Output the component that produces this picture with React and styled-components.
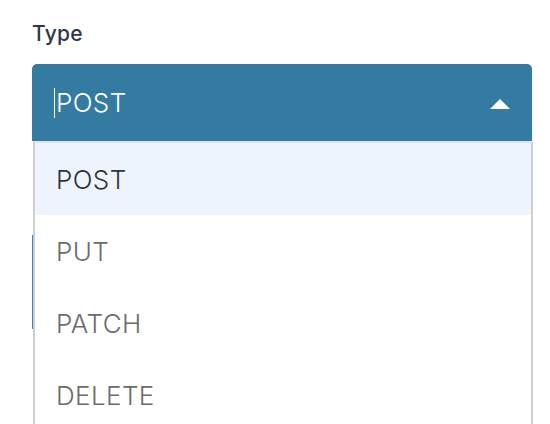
import styled, { createGlobalStyle } from "styled-components";

const GlobalStyle = createGlobalStyle`
  body {
    margin: 0;
    background: #ffffff;
    font-family: Inter, "Noto Sans", sans-serif;
  }
`;

const Page = styled.div`
  box-sizing: border-box;
  min-height: 440px;
  padding: 22px 18px 0 32px;
  width: 550px;
`;

const Label = styled.label`
  display: block;
  font-size: 21px;
  line-height: 24px;
  font-weight: 500;
  letter-spacing: 0.3px;
  color: #2d3748;
  margin-bottom: 18px;
`;

const SelectWrap = styled.div`
  position: relative;
`;

const Trigger = styled.div`
  box-sizing: border-box;
  height: 77px;
  display: flex;
  align-items: center;
  justify-content: space-between;
  padding: 0 22px 0 22px;
  background: #347ba1;
  border-radius: 5px 5px 0 0;
  color: #ffffff;
  font-size: 26px;
  font-weight: 300;
`;

const Value = styled.span`
  display: flex;
  align-items: center;
  letter-spacing: 0.4px;
`;

const Caret = styled.span`
  width: 1px;
  height: 30px;
  background: #ffffff;
  margin-right: 1px;
`;

const Arrow = styled.span`
  width: 0;
  height: 0;
  border-left: 10px solid transparent;
  border-right: 10px solid transparent;
  border-bottom: 10px solid #ffffff;
  margin-top: 2px;
`;

const Menu = styled.ul`
  position: absolute;
  top: 100%;
  left: 1px;
  z-index: 2;
  box-sizing: border-box;
  width: 500px;
  margin: 0;
  padding: 0;
  list-style: none;
  background: #ffffff;
  border-top: 2px solid #e3e3e3;
  border-left: 2px solid #cfcfcf;
  border-right: 2px solid #cfcfcf;
`;

const Option = styled.li`
  height: 72px;
  display: flex;
  align-items: center;
  padding-left: 21px;
  font-size: 26px;
  font-weight: 300;
  letter-spacing: 0.4px;
  color: ${(p) => (p.$active ? "#333333" : "#6b6b6b")};
  background: ${(p) => (p.$active ? "#edf4fe" : "#ffffff")};
`;

const NextField = styled.div`
  margin-top: 94px;
  height: 94px;
  border-left: 1px solid #3a86b5;
`;

const methods = ["POST", "PUT", "PATCH", "DELETE"];

export default function App() {
  return (
    <>
      <GlobalStyle />
      <Page>
        <Label>Type</Label>
        <SelectWrap>
          <Trigger>
            <Value>
              <Caret />
              POST
            </Value>
            <Arrow />
          </Trigger>
          <Menu>
            {methods.map((m) => (
              <Option key={m} $active={m === "POST"}>
                {m}
              </Option>
            ))}
          </Menu>
        </SelectWrap>
        <NextField />
      </Page>
    </>
  );
}
